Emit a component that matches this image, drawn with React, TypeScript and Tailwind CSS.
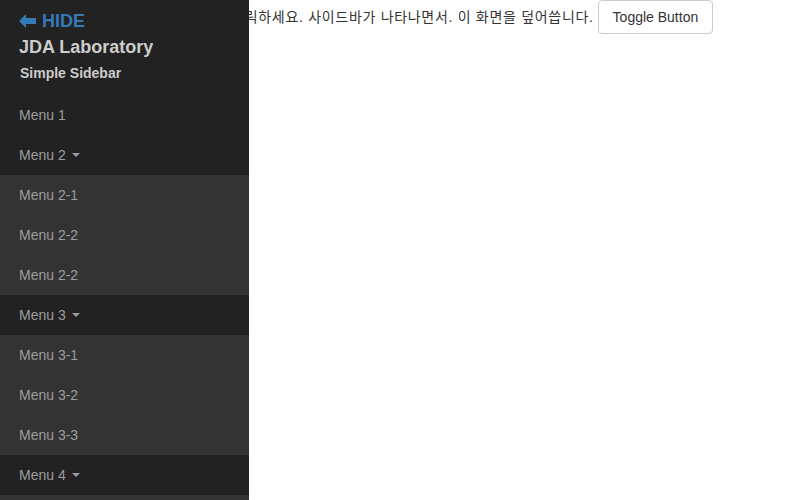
import React, { useState } from 'react';

const menus = [
  { label: 'Menu 1', subs: [] as string[] },
  { label: 'Menu 2', subs: ['Menu 2-1', 'Menu 2-2', 'Menu 2-2'] },
  { label: 'Menu 3', subs: ['Menu 3-1', 'Menu 3-2', 'Menu 3-3'] },
  { label: 'Menu 4', subs: ['Menu 4-1', 'Menu 4-2'] },
];

function Caret() {
  return <span className="ml-[6px] inline-block h-0 w-0 border-x-4 border-t-4 border-x-transparent border-t-[#9d9d9d] align-middle" />;
}

function ArrowLeft() {
  return (
    <svg width="18" height="14" viewBox="0 0 18 14" className="mr-[5px]">
      <path d="M0 7 L7 0 L7 4 L17 4 L17 10 L7 10 L7 14 Z" fill="#337ab7" />
    </svg>
  );
}

export default function App() {
  const [open, setOpen] = useState(true);

  return (
    <div className="relative h-[500px] w-full overflow-hidden bg-white text-[14px] leading-[20px] text-[#333] font-['Liberation_Sans','Noto_Sans_CJK_KR',sans-serif]">
      <div className="whitespace-nowrap pl-[9px]">
        <span className="tracking-[0.7px]">사이드바를 보려면 오른쪽의 버튼을 클릭하세요. 사이드바가 나타나면서. 이 화면을 덮어씁니다.</span>{' '}
        <button
          onClick={() => setOpen(!open)}
          className="inline-block h-[34px] rounded-[4px] border border-[#ccc] bg-white px-[14px] text-[14px] text-[#333]"
        >
          Toggle Button
        </button>
      </div>

      {open && (
        <nav className="absolute left-0 top-0 h-full w-[249px] overflow-hidden bg-[#222]">
          <div className="h-[95px] pl-[19px] pt-[10px]">
            <button onClick={() => setOpen(false)} className="flex h-[22px] items-center text-[18px] font-bold text-[#337ab7]">
              <ArrowLeft />
              HIDE
            </button>
            <div className="mt-[4px] text-[18px] font-bold leading-[22px] text-[#ccc]">JDA Laboratory</div>
            <div className="mt-[6px] pl-[1px] text-[14px] font-bold leading-[18px] text-[#ccc]">Simple Sidebar</div>
          </div>
          <ul>
            {menus.map((m) => (
              <li key={m.label}>
                <div className="flex h-[40px] items-center pl-[19px] text-[#9d9d9d]">
                  {m.label}
                  {m.subs.length > 0 && <Caret />}
                </div>
                {m.subs.length > 0 && (
                  <ul className="bg-[#333]">
                    {m.subs.map((s, i) => (
                      <li key={i} className="flex h-[40px] items-center pl-[19px] text-[#9d9d9d]">
                        {s}
                      </li>
                    ))}
                  </ul>
                )}
              </li>
            ))}
          </ul>
        </nav>
      )}
    </div>
  );
}
